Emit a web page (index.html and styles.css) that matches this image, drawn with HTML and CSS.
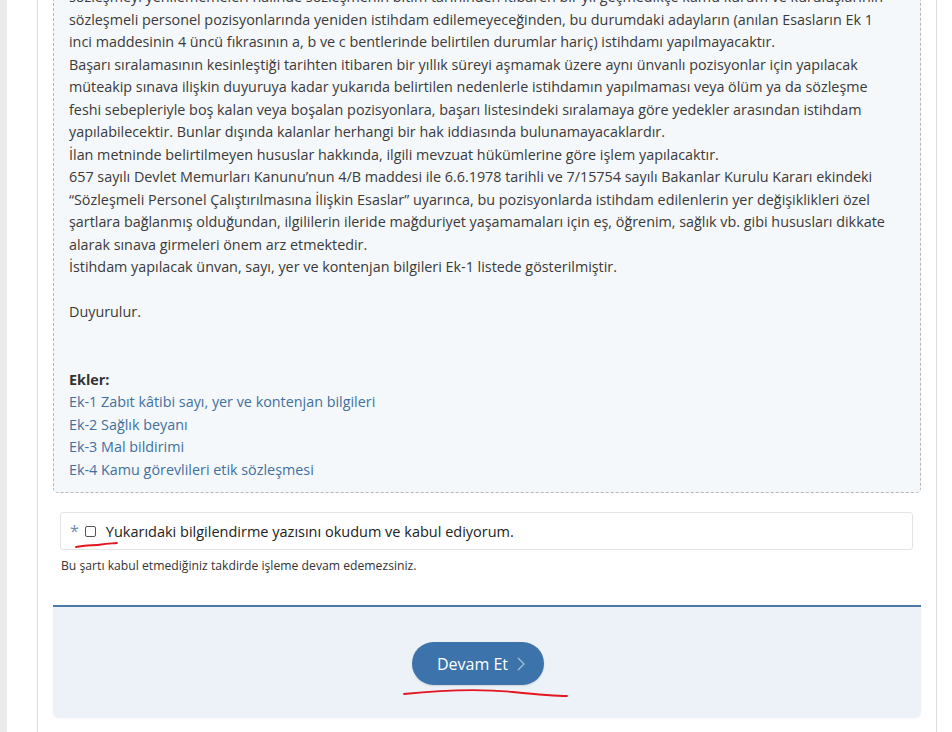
FILE: index.html
```html
<!DOCTYPE html>
<html lang="tr">
<head>
<meta charset="utf-8">
<title>Başvuru Bilgilendirme</title>
<link rel="stylesheet" href="styles.css">
</head>
<body>
<div class="page">
  <div class="rail"></div>
  <main class="container">
    <div class="notice">
      <p>sözleşmeyi yenilememeleri halinde sözleşmenin bitim tarihinden itibaren bir yıl geçmedikçe kamu kurum ve kuruluşlarının sözleşmeli personel pozisyonlarında yeniden istihdam edilemeyeceğinden, bu durumdaki adayların (anılan Esasların Ek 1 inci maddesinin 4 üncü fıkrasının a, b ve c bentlerinde belirtilen durumlar hariç) istihdamı yapılmayacaktır.<br>
      Başarı sıralamasının kesinleştiği tarihten itibaren bir yıllık süreyi aşmamak üzere aynı ünvanlı pozisyonlar için yapılacak müteakip sınava ilişkin duyuruya kadar yukarıda belirtilen nedenlerle istihdamın yapılmaması veya ölüm ya da sözleşme feshi sebepleriyle boş kalan veya boşalan pozisyonlara, başarı listesindeki sıralamaya göre yedekler arasından istihdam yapılabilecektir. Bunlar dışında kalanlar herhangi bir hak iddiasında bulunamayacaklardır.<br>
      İlan metninde belirtilmeyen hususlar hakkında, ilgili mevzuat hükümlerine göre işlem yapılacaktır.<br>
      657 sayılı Devlet Memurları Kanunu’nun 4/B maddesi ile 6.6.1978 tarihli ve 7/15754 sayılı Bakanlar Kurulu Kararı ekindeki “Sözleşmeli Personel Çalıştırılmasına İlişkin Esaslar” uyarınca, bu pozisyonlarda istihdam edilenlerin yer değişiklikleri özel şartlara bağlanmış olduğundan, ilgililerin ileride mağduriyet yaşamamaları için eş, öğrenim, sağlık vb. gibi hususları dikkate alarak sınava girmeleri önem arz etmektedir.<br>
      İstihdam yapılacak ünvan, sayı, yer ve kontenjan bilgileri Ek-1 listede gösterilmiştir.</p>
      <p class="spaced">Duyurulur.</p>
      <p class="attachments"><strong>Ekler:</strong><br>
        <a href="#">Ek-1 Zabıt kâtibi sayı, yer ve kontenjan bilgileri</a><br>
        <a href="#">Ek-2 Sağlık beyanı</a><br>
        <a href="#">Ek-3 Mal bildirimi</a><br>
        <a href="#">Ek-4 Kamu görevlileri etik sözleşmesi</a></p>
    </div>

    <label class="accept">
      <span class="req">*</span>
      <input type="checkbox" class="check">
      <span class="accept-text">Yukarıdaki bilgilendirme yazısını okudum ve kabul ediyorum.</span>
      <svg class="mark mark-check" width="44" height="8" viewBox="0 0 44 8"><path d="M1 6 C 10 4, 20 4.5, 26 3.5 S 36 2.5, 42 2" fill="none" stroke="#e3151f" stroke-width="1.8" stroke-linecap="round"/></svg>
    </label>
    <p class="hint">Bu şartı kabul etmediğiniz takdirde işleme devam edemezsiniz.</p>

    <div class="actions">
      <button class="btn" type="button">Devam Et
        <svg class="chev" width="8" height="14" viewBox="0 0 8 14"><polyline points="1,1 7,7 1,13" fill="none" stroke="#a8c3e0" stroke-width="1.2"/></svg>
      </button>
      <svg class="mark mark-btn" width="166" height="12" viewBox="0 0 166 12"><path d="M1 7 C 40 3, 80 2, 110 5 S 150 9, 164 9" fill="none" stroke="#e3151f" stroke-width="1.8" stroke-linecap="round"/></svg>
    </div>
  </main>
</div>
</body>
</html>
```
FILE: styles.css
```css
html, body {
  margin: 0;
  padding: 0;
  background: #ffffff;
}

body {
  font-family: "Open Sans", "Noto Sans", "Liberation Sans", sans-serif;
  color: #333333;
  overflow: hidden;
  height: 732px;
}

.page {
  display: flex;
  align-items: stretch;
  min-height: 732px;
}

.rail {
  width: 7px;
  flex: none;
  background: #ebebeb;
}

.container {
  margin-left: 30px;
  width: 868px;
  padding: 0 15px;
  border-left: 1px solid #dedede;
  border-right: 1px solid #dedede;
  display: flex;
  flex-direction: column;
}

.notice {
  margin-top: -27px;
  background: #f5f8fb;
  border: 1px dashed #b8b8b8;
  border-radius: 5px;
  padding: 12px 25px 11px 15px;
  font-size: 14.35px;
  line-height: 22.5px;
  color: #3a3a3a;
}

.notice p {
  margin: 0;
}

.notice .spaced {
  margin-top: 22.5px;
}

.notice .attachments {
  margin-top: 45px;
}

.notice strong {
  font-weight: 700;
  color: #333;
}

.notice a {
  color: #41709e;
  text-decoration: none;
}

.accept {
  position: relative;
  margin: 19px 8px 0 7px;
  height: 38px;
  box-sizing: border-box;
  border: 1px solid #e4e4e4;
  border-radius: 3px;
  display: flex;
  align-items: center;
  padding: 0 9px;
  font-size: 14.5px;
  color: #222;
}

.req {
  color: #6a8cb3;
  font-size: 16px;
  margin-right: 6px;
}

.check {
  appearance: none;
  -webkit-appearance: none;
  width: 11px;
  height: 11px;
  margin: 0 10px 0 0;
  border: 1px solid #555;
  border-radius: 2px;
  background: #fff;
  flex: none;
}

.mark {
  position: absolute;
  pointer-events: none;
}

.mark-check {
  left: 14px;
  top: 28px;
}

.hint {
  margin: 7px 0 0 8px;
  font-size: 12.2px;
  color: #333;
}

.actions {
  position: relative;
  margin-top: 31px;
  height: 113px;
  box-sizing: border-box;
  background: #edf1f8;
  border-top: 2px solid #4d7ba7;
  border-radius: 0 0 6px 6px;
  box-shadow: 0 0 3px rgba(0, 0, 0, 0.06);
  display: flex;
  justify-content: center;
  align-items: flex-start;
  padding-top: 35px;
}

.btn {
  width: 132px;
  height: 43px;
  margin-right: 18px;
  border: none;
  border-radius: 22px;
  background: #3b73aa;
  color: #ffffff;
  font-family: "Open Sans", "Noto Sans", sans-serif;
  font-size: 16px;
  padding: 0 0 0 6px;
  display: flex;
  align-items: center;
  justify-content: center;
  gap: 9px;
  box-shadow: 0 1px 2px rgba(0, 0, 0, 0.12);
}

.chev {
  display: block;
}

.mark-btn {
  left: 350px;
  top: 80px;
}
```
